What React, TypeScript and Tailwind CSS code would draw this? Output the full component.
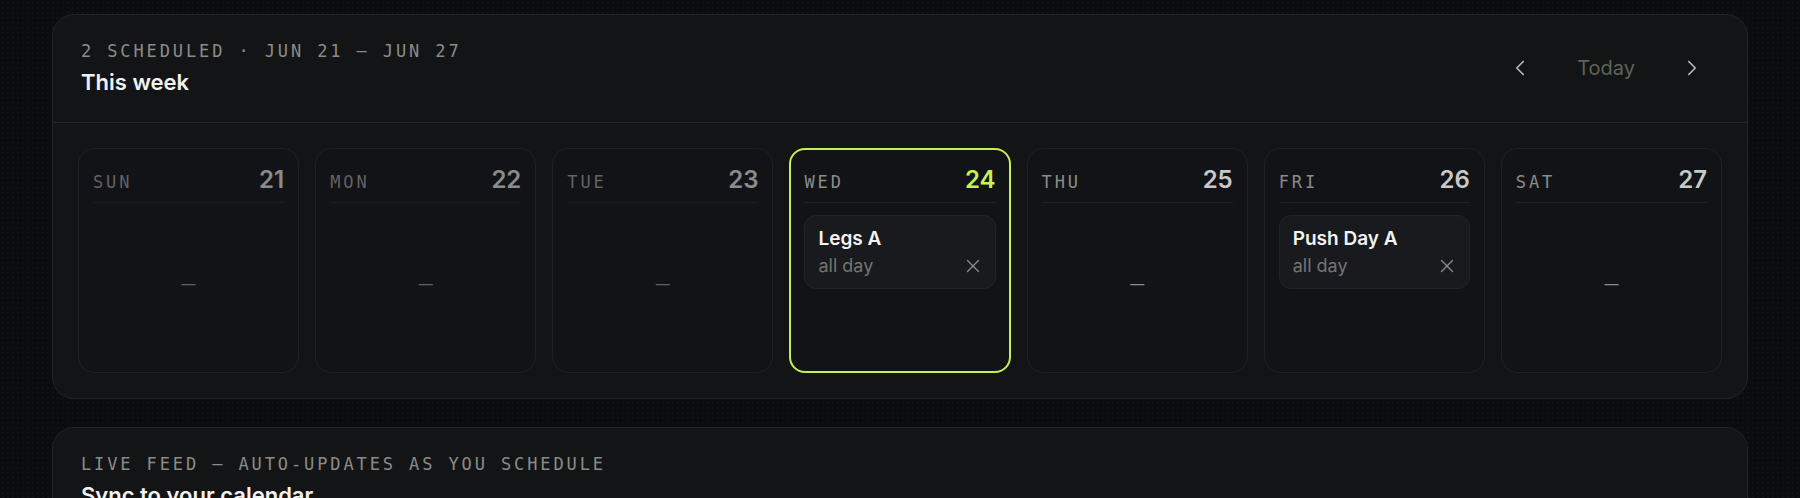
import React from "react";
import { ChevronLeft, ChevronRight, X } from "lucide-react";

type Day = {
  name: string;
  date: number;
  when: "past" | "today" | "future";
  event?: string;
};

const DAYS: Day[] = [
  { name: "SUN", date: 21, when: "past" },
  { name: "MON", date: 22, when: "past" },
  { name: "TUE", date: 23, when: "past" },
  { name: "WED", date: 24, when: "today", event: "Legs A" },
  { name: "THU", date: 25, when: "future" },
  { name: "FRI", date: 26, when: "future", event: "Push Day A" },
  { name: "SAT", date: 27, when: "future" },
];

const MONO = "font-['DejaVu_Sans_Mono','Liberation_Mono',monospace]";

function SectionHeader({
  eyebrow,
  title,
  children,
}: {
  eyebrow: string;
  title: string;
  children?: React.ReactNode;
}) {
  return (
    <header className="flex items-center justify-between pl-[28px] pr-[31px] pt-[24px] pb-[25px]">
      <div className="flex flex-col gap-1">
        <p
          className={`${MONO} text-[17px] leading-[24px] tracking-[0.17em] text-[#8a8c88] uppercase`}
        >
          {eyebrow}
        </p>
        <h2 className="text-[22px] leading-[30px] font-semibold text-[#f2f2f2]">
          {title}
        </h2>
      </div>
      {children}
    </header>
  );
}

function DayColumn({ day }: { day: Day }) {
  const isToday = day.when === "today";
  return (
    <div
      className={`flex h-[225px] flex-col rounded-[16px] bg-[#121316] ${
        isToday
          ? "border-2 border-[#c6ef52] px-[13px] pt-[17px] pb-[13px]"
          : "border border-[#1f2125] px-[14px] pt-[18px] pb-[14px]"
      }`}
    >
      <div
        className={`flex flex-1 flex-col ${day.when === "past" ? "opacity-[0.66]" : ""}`}
      >
        {/* day name + date */}
        <div className="flex items-baseline justify-between border-b border-[#1f2125] pb-[7px]">
          <span
            className={`${MONO} text-[17px] leading-[26px] tracking-[0.17em] text-[#8a8c88]`}
          >
            {day.name}
          </span>
          <span
            className={`text-[24px] leading-[26px] font-semibold ${
              isToday ? "text-[#c6f250]" : "text-[#c9c9c9]"
            }`}
          >
            {day.date}
          </span>
        </div>

        <div className="flex flex-1 flex-col pt-[12px]">
          {day.event ? (
            <div className="rounded-[12px] border border-[#212327] bg-[#181a1d] px-[13px] pt-[11px] pb-[9px]">
              <p className="text-[19px] leading-[24px] font-semibold text-[#f3f3f3]">
                {day.event}
              </p>
              <div className="mt-[2px] flex items-center justify-between">
                <span className="text-[18px] leading-[26px] text-[#727570]">
                  all day
                </span>
                <button className="-mr-[2px] text-[#8a8b8c]">
                  <X size={22} strokeWidth={1.5} />
                </button>
              </div>
            </div>
          ) : (
            <div className="flex flex-1 items-center justify-center pb-[7px]">
              <span className="text-[14px] text-[#8a8c88]">—</span>
            </div>
          )}
        </div>
      </div>
    </div>
  );
}

export default function App() {
  return (
    <main className="min-h-screen w-full bg-[#0b0c0f] bg-[radial-gradient(circle,#ffffff07_1px,transparent_1px)] bg-[length:5px_5px] px-[52px] pt-[14px] pb-10 font-['Inter','Noto_Sans',sans-serif]">
      <div className="flex flex-col gap-[28px]">
        {/* ── This week ─────────────────────────────────────── */}
        <section className="rounded-[22px] border border-[#222428] bg-[#131416]">
          <SectionHeader eyebrow="2 scheduled · Jun 21 – Jun 27" title="This week">
            <nav className="flex items-center">
              <button className="flex h-12 w-12 items-center justify-center text-[#b4b4b4]">
                <ChevronLeft size={26} strokeWidth={1.6} />
              </button>
              <button className="px-[33px] text-[20px] leading-[30px] text-[#5d6456]">
                Today
              </button>
              <button className="flex h-12 w-12 items-center justify-center text-[#b4b4b4]">
                <ChevronRight size={26} strokeWidth={1.6} />
              </button>
            </nav>
          </SectionHeader>

          <div className="grid grid-cols-7 gap-4 border-t border-[#222428] p-[25px]">
            {DAYS.map((d) => (
              <DayColumn key={d.name} day={d} />
            ))}
          </div>
        </section>

        {/* ── Live feed ─────────────────────────────────────── */}
        <section className="rounded-[22px] border border-[#222428] bg-[#131416]">
          <SectionHeader
            eyebrow="Live feed — auto-updates as you schedule"
            title="Sync to your calendar"
          />
          <div className="h-[160px]" />
        </section>
      </div>
    </main>
  );
}
